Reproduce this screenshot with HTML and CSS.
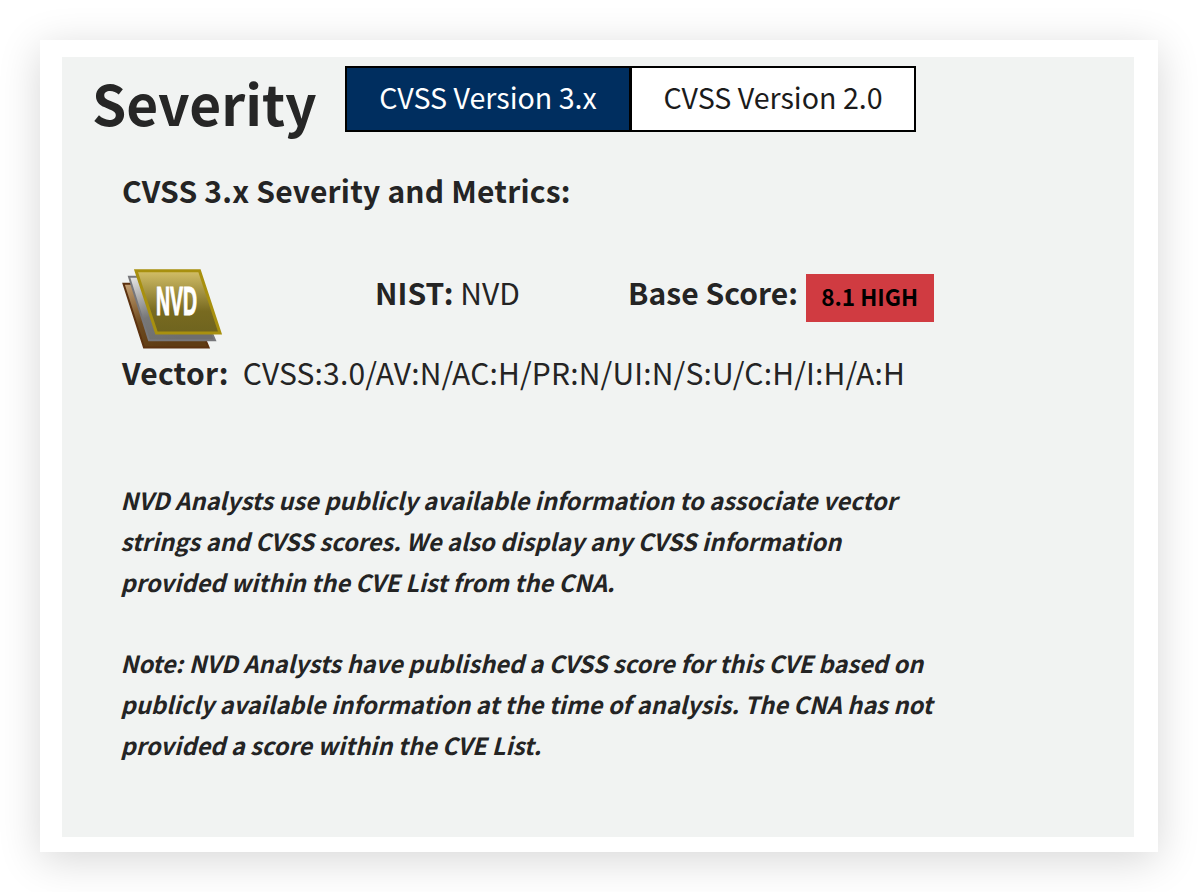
FILE: index.html
```html
<!DOCTYPE html>
<html lang="en">
<head>
<meta charset="utf-8">
<title>Severity</title>
<link rel="stylesheet" href="styles.css">
</head>
<body>
<main class="card">
  <section class="panel">
    <header class="head">
      <h2 class="title">Severity</h2>
      <div class="tabs">
        <button class="tab tab-active">CVSS Version 3.x</button>
        <button class="tab">CVSS Version 2.0</button>
      </div>
    </header>
    <div class="content">
      <h3 class="subtitle">CVSS 3.x Severity and Metrics:</h3>
      <div class="score-row">
        <svg class="logo" width="100" height="82" viewBox="0 0 100 82" aria-label="NVD">
          <defs>
            <linearGradient id="gold" x1="0" y1="0" x2="0" y2="1">
              <stop offset="0" stop-color="#d3bf68"/>
              <stop offset="0.65" stop-color="#786a20"/>
              <stop offset="1" stop-color="#6f641f"/>
            </linearGradient>
            <linearGradient id="grey" x1="0" y1="0" x2="0.5" y2="1">
              <stop offset="0" stop-color="#e8e8e8"/>
              <stop offset="0.6" stop-color="#777777"/>
              <stop offset="1" stop-color="#6e6e6e"/>
            </linearGradient>
            <linearGradient id="tan" x1="0" y1="0" x2="0.4" y2="1">
              <stop offset="0" stop-color="#c6a173"/>
              <stop offset="0.6" stop-color="#6e4a1f"/>
              <stop offset="1" stop-color="#5f3c14"/>
            </linearGradient>
          </defs>
          <polygon points="1.5,15.8 60,15.8 86.6,79.4 22,79.4" fill="url(#tan)" stroke="#5c3210" stroke-width="2"/>
          <polygon points="7,8.8 66,8.8 93,72.2 27,72.2" fill="url(#grey)" stroke="#77777b" stroke-width="2"/>
          <polygon points="14,2.8 77.5,2.8 98,65 34.5,65" fill="url(#gold)" stroke="#a8900f" stroke-width="3"/>
          <text class="logo-text" x="0" y="0" transform="translate(34 47) scale(0.475 1)">NVD</text>
        </svg>
        <div class="source"><b>NIST:</b> NVD</div>
        <div class="base"><b>Base Score:</b><span class="badge">8.1 HIGH</span></div>
      </div>
      <p class="vector"><b class="vector-label">Vector:</b><span class="vector-value">CVSS:3.0/AV:N/AC:H/PR:N/UI:N/S:U/C:H/I:H/A:H</span></p>
      <p class="note">NVD Analysts use publicly available information to associate vector<br>strings and CVSS scores. We also display any CVSS information<br>provided within the CVE List from the CNA.</p>
      <p class="note note-last">Note: NVD Analysts have published a CVSS score for this CVE based on<br>publicly available information at the time of analysis. The CNA has not<br>provided a score within the CVE List.</p>
    </div>
  </section>
</main>
</body>
</html>
```

FILE: styles.css
```css
* { box-sizing: border-box; }
html, body { margin: 0; background: #fff; }
body {
  padding: 40px;
  height: 892px;
  overflow: hidden;
  font-family: "Noto Sans CJK SC", "Noto Sans", sans-serif;
  color: #242424;
}
.card {
  width: 1118px;
  height: 812px;
  padding: 17px 24px 15px 22px;
  background: #fff;
  box-shadow: 0 8px 40px rgba(0, 0, 0, 0.16);
}
.panel {
  height: 780px;
  background: #f1f3f2;
}
.head {
  display: flex;
  align-items: flex-start;
  height: 85px;
  padding: 9px 0 0 30px;
}
.title {
  margin: -1px 0 0;
  width: 253px;
  font-size: 55px;
  line-height: 74px;
  font-weight: 700;
  color: #262626;
}
.tabs { display: flex; }
.tab {
  height: 66px;
  width: 286px;
  padding: 0 0 4px;
  margin-left: -1px;
  border: 2px solid #000;
  background: #fff;
  color: #1b1b1b;
  font: 400 28.6px/1 "Noto Sans CJK SC", "Noto Sans", sans-serif;
}
.tab-active {
  margin-left: 0;
  background: #002e5f;
  color: #fff;
}
.content { padding: 0 0 0 60px; }
.subtitle {
  margin: 26px 0 0;
  font-size: 30px;
  line-height: 44px;
  font-weight: 700;
  letter-spacing: 0.2px;
}
.score-row {
  display: flex;
  align-items: flex-start;
  margin-top: 54px;
  height: 84px;
  font-size: 30px;
  line-height: 44px;
  letter-spacing: 0.05px;
}
.logo { flex: none; margin-top: 2px; }
.logo-text {
  font: 700 41px "Liberation Sans", sans-serif;
  fill: #fff;
  stroke: #fff;
  stroke-width: 1.2px;
}
.source {
  margin: 4px 0 0 153px;
  width: 253px;
}
.base { display: flex; align-items: flex-start; margin-top: 4px; }
.badge {
  margin: 4px 0 0 8px;
  width: 128px;
  height: 48px;
  padding-right: 1px;
  background: #d03b41;
  color: #000;
  font-size: 22.6px;
  font-weight: 700;
  line-height: 46px;
  text-align: center;
  letter-spacing: 0;
}
.vector {
  margin: 0;
  font-size: 30px;
  line-height: 44px;
}
.vector-label { letter-spacing: 0.25px; }
.vector-value { margin-left: 14px; letter-spacing: 0.16px; }
.note {
  margin: 0 0 40px -1.5px;
  font-size: 23.65px;
  line-height: 41px;
  font-weight: 700;
  font-style: italic;
}
.vector + .note { margin-top: 86px; }
.note-last { margin-bottom: 0; }
```
